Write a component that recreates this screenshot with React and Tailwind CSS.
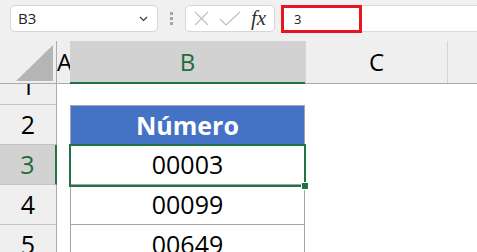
import React from 'react';

// Excel-like view: name box, formula bar, column/row headers and a small table
const rows = [
  { n: 2, kind: 'head', text: 'Número' },
  { n: 3, kind: 'cell', text: '00003', selected: true },
  { n: 4, kind: 'cell', text: '00099' },
  { n: 5, kind: 'cell', text: '00649' },
];

const Toolbar = () => (
  <div className="h-[41px] bg-[#f0f0f0] flex items-start pt-[5px] pl-[10px]">
    <div className="w-[148px] h-[27px] bg-white border border-[#d6d6d6] rounded-[5px] flex items-center pl-[7px] pr-[9px]">
      <span className="text-[15px] text-[#222] leading-none">B3</span>
      <svg className="ml-auto" width="9" height="6" viewBox="0 0 9 6">
        <path d="M1 1l3.5 3.5L8 1" fill="none" stroke="#333" strokeWidth="1.1" />
      </svg>
    </div>
    <div className="w-[27px] h-[27px] flex flex-col items-center justify-center gap-[2px]">
      <span className="w-[3px] h-[3px] bg-[#a5a5a5]" />
      <span className="w-[3px] h-[3px] bg-[#a5a5a5]" />
      <span className="w-[3px] h-[3px] bg-[#a5a5a5]" />
    </div>
    <div className="w-[90px] h-[27px] bg-white border border-[#d6d6d6] rounded-[5px] flex items-center pl-[8px]">
      <svg width="15" height="15" viewBox="0 0 15 15">
        <path d="M1 1l13 13M14 1L1 14" stroke="#bdbdbd" strokeWidth="1.1" />
      </svg>
      <svg className="ml-[10px]" width="22" height="15" viewBox="0 0 22 15">
        <path d="M1 8l6 6L21 1" fill="none" stroke="#bdbdbd" strokeWidth="1.1" />
      </svg>
      <span className="ml-[10px] text-[21px] italic text-[#333] leading-none" style={{ fontFamily: '"Liberation Serif", serif' }}>
        fx
      </span>
    </div>
    <div className="flex-1 h-[27px] ml-[6px] bg-white border-y border-[#dcdcdc] flex">
      <div className="w-[81px] h-[28px] -mt-px border-[3px] border-[#e8141f] flex items-center pl-[10px]">
        <span className="text-[13px] text-[#222] leading-none">3</span>
      </div>
    </div>
  </div>
);

const ColumnHeaders = () => (
  <div className="h-[43px] flex bg-[#efefef] border-b border-[#ababab] text-[24px] leading-none">
    <div className="w-[57px] border-r border-[#ababab] flex items-end justify-end pr-[3px] pb-[2px]">
      <svg width="37" height="36" viewBox="0 0 37 36">
        <path d="M37 0V36H0Z" fill="#b5b5b5" />
      </svg>
    </div>
    <div className="w-[13px] overflow-hidden flex items-center">
      <span className="text-black">A</span>
    </div>
    <div className="w-[235px] bg-[#d2d2d2] border-b-2 border-[#217346] -mb-px flex items-center justify-center">
      <span className="text-[#1e6b41]">B</span>
    </div>
    <div className="w-[143px] border-l border-r border-[#d4d4d4] flex items-center justify-center">
      <span className="text-black">C</span>
    </div>
    <div className="flex-1" />
  </div>
);

export default function App() {
  return (
    <div className="w-[477px] h-[252px] overflow-hidden bg-white" style={{ fontFamily: '"Open Sans", "Liberation Sans", sans-serif' }}>
      <Toolbar />
      <ColumnHeaders />
      <div className="relative flex h-[168px] overflow-hidden">
        {/* row headers */}
        <div className="w-[57px] bg-[#efefef] border-r border-[#ababab] text-[25px] leading-none">
          <div className="h-[21px] border-b border-[#c4c4c4] overflow-hidden">
            <div className="h-[40px] -mt-[19px] flex items-center justify-center">1</div>
          </div>
          {rows.map((r) => (
            <div
              key={r.n}
              className={
                r.selected
                  ? 'h-[40px] bg-[#d2d2d2] border-r-2 border-[#217346] -mr-px border-b border-b-[#c4c4c4] flex items-center justify-center text-[#1e6b41]'
                  : 'h-[40px] border-b border-[#c4c4c4] flex items-center justify-center text-black'
              }
            >
              {r.n}
            </div>
          ))}
        </div>
        {/* column A (narrow) */}
        <div className="w-[13px]" />
        {/* column B table */}
        <div className="w-[235px] text-[25px] leading-none">
          <div className="h-[21px]" />
          {rows.map((r) =>
            r.kind === 'head' ? (
              <div key={r.n} className="h-[40px] bg-[#4472c4] border border-[#a6a6a6] border-b-0 flex items-center justify-center font-bold text-white">
                {r.text}
              </div>
            ) : (
              <div key={r.n} className="h-[40px] border-x border-b border-[#a6a6a6] flex items-center justify-center text-black">
                {r.text}
              </div>
            )
          )}
        </div>
        {/* selection box over B3 */}
        <div className="absolute left-[69px] top-[60px] w-[237px] h-[43px] border-2 border-[#217346]">
          <span className="absolute -right-[4px] -bottom-[4px] w-[6px] h-[6px] bg-[#217346] outline outline-1 outline-white" />
        </div>
      </div>
    </div>
  );
}
